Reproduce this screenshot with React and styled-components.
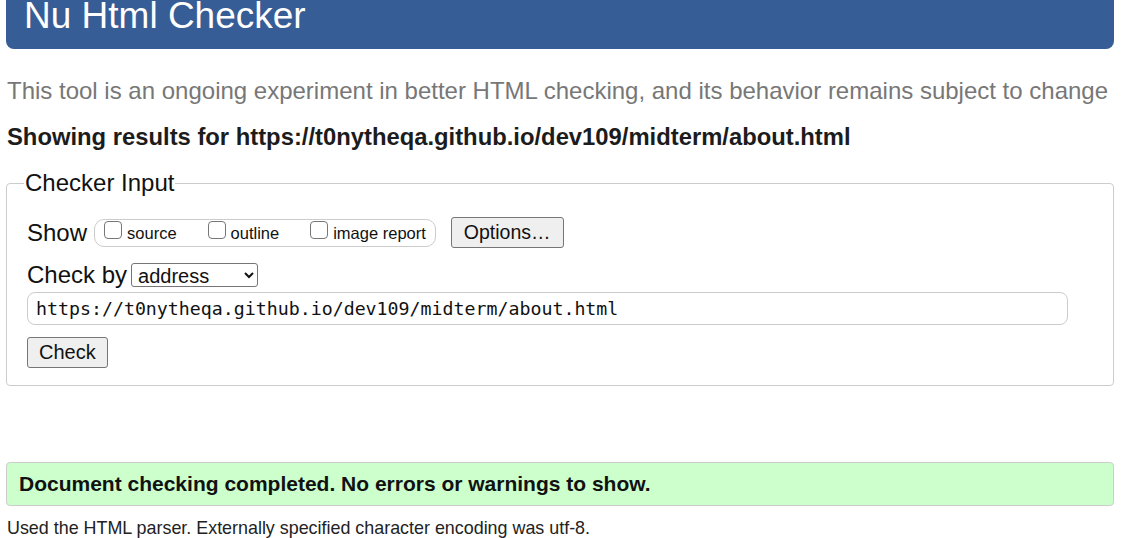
import React from "react";
import styled, { createGlobalStyle } from "styled-components";

const GlobalStyle = createGlobalStyle`
  body {
    margin: 0;
    background: #fff;
    font-family: "Liberation Sans", Arial, sans-serif;
    color: #111;
  }
`;

const Page = styled.div`
  padding: 0 15px 0 6px;
`;

const Header = styled.h1`
  margin: 0;
  height: 49px;
  box-sizing: border-box;
  padding: 0 0 0 18px;
  background: #365d95;
  border-radius: 0 0 8px 8px;
  color: #fff;
  font-size: 37px;
  line-height: 32px;
  font-weight: 400;
`;

const Subtitle = styled.p`
  margin: 28px 0 0 1px;
  font-size: 24px;
  line-height: 28px;
  color: #777;
  white-space: nowrap;
`;

const Results = styled.p`
  margin: 20px 0 0 1px;
  font-size: 23.8px;
  line-height: 24px;
  font-weight: 700;
  color: #1c1c1c;
  white-space: nowrap;
`;

const Fieldset = styled.fieldset`
  margin: 20px 0 0;
  border: 1px solid #ccc;
  border-radius: 4px;
  padding: 0 20px 17px 20px;
`;

const Legend = styled.legend`
  font-size: 24px;
  padding: 0 1px;
  margin-left: -3px;
  color: #111;
`;

const Row = styled.div`
  display: flex;
  align-items: center;
  gap: ${(p) => p.gap || 4}px;
  margin-top: ${(p) => p.top || 0}px;
`;

const Label = styled.span`
  font-size: 24px;
  color: #111;
`;

const Group = styled.div`
  display: flex;
  align-items: center;
  gap: 31px;
  height: 28px;
  box-sizing: border-box;
  padding: 0 9px 1px 9px;
  border: 1px solid #ccc;
  border-radius: 10px;
`;

const Option = styled.label`
  display: flex;
  align-items: flex-end;
  gap: 5px;
  font-size: 16.5px;
  color: #111;
`;

const Check = styled.input`
  appearance: none;
  width: 18px;
  height: 18px;
  margin: 0 0 4px;
  border: 1.5px solid #767676;
  border-radius: 4px;
  background: #fff;
`;

const Button = styled.button`
  font-family: "Liberation Sans", Arial, sans-serif;
  font-size: ${(p) => p.fs || 20}px;
  height: 31px;
  margin-left: ${(p) => p.ml || 0}px;
  padding: 0 ${(p) => p.px || 12}px;
  background: #efefef;
  color: #111;
  border: 1px solid #767676;
  border-radius: 3px;
`;

const Select = styled.select`
  font-family: "Liberation Sans", Arial, sans-serif;
  font-size: 20px;
  width: 127px;
  height: 24px;
  padding: 0 2px;
  border: 1px solid #767676;
  border-radius: 3px;
  background: #fff;
  color: #111;
`;

const UrlInput = styled.input`
  display: block;
  box-sizing: border-box;
  width: 1041px;
  height: 33px;
  margin-top: 3px;
  padding: 0 8px;
  font-family: "DejaVu Sans Mono", "Liberation Mono", monospace;
  font-size: 18.25px;
  color: #111;
  border: 1px solid #ccc;
  border-radius: 8px;
`;

const Success = styled.div`
  margin-top: 76px;
  height: 44px;
  box-sizing: border-box;
  display: flex;
  align-items: center;
  padding-left: 12px;
  background: #ccffcc;
  border: 1px solid #ccc;
  border-radius: 4px;
  font-size: 21px;
  font-weight: 700;
  color: #111;
`;

const Note = styled.p`
  margin: 12px 0 0 1px;
  font-size: 17.9px;
  color: #222;
  white-space: nowrap;
`;

const url = "https://t0nytheqa.github.io/dev109/midterm/about.html";

export default function App() {
  return (
    <>
      <GlobalStyle />
      <Page>
        <Header>Nu Html Checker</Header>
        <Subtitle>
          This tool is an ongoing experiment in better HTML checking, and its
          behavior remains subject to change
        </Subtitle>
        <Results>Showing results for {url}</Results>
        <Fieldset>
          <Legend>Checker Input</Legend>
          <Row gap={7} top={20}>
            <Label>Show</Label>
            <Group>
              <Option>
                <Check type="checkbox" />
                source
              </Option>
              <Option>
                <Check type="checkbox" />
                outline
              </Option>
              <Option>
                <Check type="checkbox" />
                image report
              </Option>
            </Group>
            <Button ml={8} fs={19.5}>Options…</Button>
          </Row>
          <Row gap={4} top={13}>
            <Label>Check by</Label>
            <Select defaultValue="address">
              <option value="address">address</option>
              <option value="file">file upload</option>
              <option value="text">text input</option>
            </Select>
          </Row>
          <UrlInput defaultValue={url} />
          <Row top={12}>
            <Button px={11}>Check</Button>
          </Row>
        </Fieldset>
        <Success>Document checking completed. No errors or warnings to show.</Success>
        <Note>
          Used the HTML parser. Externally specified character encoding was
          utf-8.
        </Note>
      </Page>
    </>
  );
}
